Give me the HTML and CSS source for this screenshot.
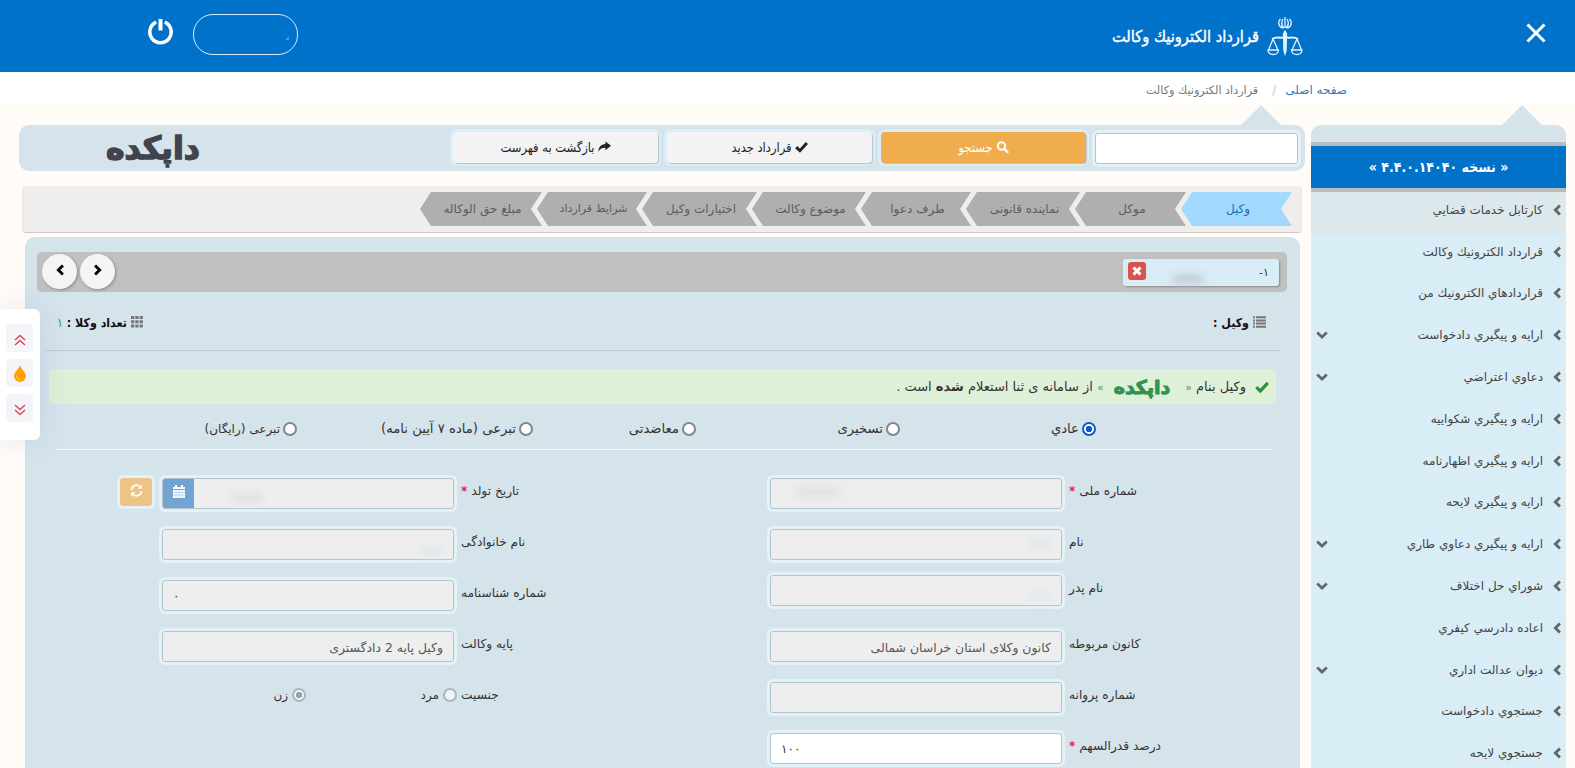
FILE: index.html
```html
<!DOCTYPE html>
<html lang="fa" dir="rtl">
<head>
  <meta charset="UTF-8">
  <title>قرارداد الكترونيك وكالت</title>
  <meta name="viewport" content="width=device-width, initial-scale=1">
  <link rel="stylesheet" href="styles.css">
</head>
<body>
  <svg class="sprite">
    <symbol id="i-chev-l" viewBox="0 0 12 14"><path d="M9.500 1.500L4 7l5.500 5.500" fill="none" stroke="currentColor" stroke-width="3.400"/></symbol>
    <symbol id="i-chev-r" viewBox="0 0 12 14"><path d="M2.500 1.500L8 7l-5.500 5.500" fill="none" stroke="currentColor" stroke-width="3.400"/></symbol>
    <symbol id="i-chev-d" viewBox="0 0 12 8"><path d="M1.200 1.500L6 6l4.800-4.500" fill="none" stroke="currentColor" stroke-width="2.800"/></symbol>
    <symbol id="i-check" viewBox="0 0 14 12"><path d="M1.300 6.200l4 3.800L12.800 1.800" fill="none" stroke="currentColor" stroke-width="3.200"/></symbol>
    <symbol id="i-share" viewBox="0 0 14 12"><path d="M8 0l6 4.700-6 4.800V6.800C4.500 6.500 2 8 .5 11 .3 6 3.500 3 8 2.700z" fill="currentColor"/></symbol>
    <symbol id="i-search" viewBox="0 0 12 12"><circle cx="5" cy="5" r="3.700" fill="none" stroke="currentColor" stroke-width="2"/><path d="M7.800 7.800L11 11" stroke="currentColor" stroke-width="2.400" stroke-linecap="round"/></symbol>
    <symbol id="i-x" viewBox="0 0 10 10"><path d="M1.500 1.500l7 7M8.500 1.500l-7 7" stroke="currentColor" stroke-width="3"/></symbol>
    <symbol id="i-list" viewBox="0 0 13 12"><path d="M0 1.200h2M3 1.200h10M0 4.400h2M3 4.400h10M0 7.600h2M3 7.600h10M0 10.800h2M3 10.800h10" stroke="currentColor" stroke-width="2"/></symbol>
    <symbol id="i-grid" viewBox="0 0 12 12"><path d="M0 1.500h3.300M4.300 1.500h3.300M8.600 1.500h3.300M0 5.800h3.300M4.300 5.800h3.300M8.600 5.800h3.300M0 10.100h3.300M4.300 10.100h3.300M8.600 10.100h3.300" stroke="currentColor" stroke-width="3"/></symbol>
    <symbol id="i-up" viewBox="0 0 12 12"><path d="M1 6l5-4.500L11 6M1 11l5-4.500L11 11" fill="none" stroke="currentColor" stroke-width="1.500"/></symbol>
    <symbol id="i-down" viewBox="0 0 12 12"><path d="M1 1l5 4.500L11 1M1 6l5 4.500L11 6" fill="none" stroke="currentColor" stroke-width="1.500"/></symbol>
  </svg>

  <header class="topbar">
    <svg class="close" viewBox="0 0 20 20"><path d="M1.500 1.500l17 17M18.500 1.500l-17 17" stroke="#fff" stroke-width="3"/></svg>
    <svg class="emblem" viewBox="0 0 36 40" fill="none" stroke="#e4f2ff" stroke-width="1.300">
      <path d="M18 1v11M16 3c-2 3-2 6 1 9M20 3c2 3 2 6-1 9M13.500 3c-3 3-2 8 2.500 9M22.500 3c3 3 2 8-2.500 9"/>
      <path d="M18 15l1.500 3-.5 17-1 3-1-3-.5-17z" fill="#e4f2ff"/>
      <path d="M5 23c5-3 9 0 13-2 4 2 8-1 13 2" stroke-width="2"/>
      <path d="M6 23L1.500 34M6 23l5 11M30 23l-5 11M30 23l4.500 11M1 34h10.500c-.5 6-10 6-10.500 0zM24.500 34H35c-.5 6-10 6-10.500 0z"/>
    </svg>
    <h1>قرارداد الكترونيك وكالت</h1>
    <div class="userbox"><i></i></div>
    <svg class="power" viewBox="0 0 25 26" fill="none" stroke="#fff"><path d="M8.200 3.200a10.700 10.700 0 1 0 8.600 0" stroke-width="3.500"/><path d="M12.500 0v11.500" stroke-width="4"/></svg>
  </header>

  <nav class="crumbs">
    <a href="#">صفحه اصلی</a>
    <span class="slash">/</span>
    <span class="here">قرارداد الكترونيك وكالت</span>
  </nav>

  <div class="page">
    <aside class="sidebar">
      <div class="version">« نسخه ۴.۴.۰.۱۴۰۴۰ »</div>
      <ul class="menu">
        <li class="active"><svg class="go"><use href="#i-chev-l"/></svg><span>كارتابل خدمات قضايي</span></li>
        <li><svg class="go"><use href="#i-chev-l"/></svg><span>قرارداد الكترونيك وكالت</span></li>
        <li><svg class="go"><use href="#i-chev-l"/></svg><span>قراردادهاي الكترونيك من</span></li>
        <li><svg class="go"><use href="#i-chev-l"/></svg><span>ارايه و پيگيري دادخواست</span><svg class="more"><use href="#i-chev-d"/></svg></li>
        <li><svg class="go"><use href="#i-chev-l"/></svg><span>دعاوي اعتراضي</span><svg class="more"><use href="#i-chev-d"/></svg></li>
        <li><svg class="go"><use href="#i-chev-l"/></svg><span>ارايه و پيگيري شكواييه</span></li>
        <li><svg class="go"><use href="#i-chev-l"/></svg><span>ارايه و پيگيري اظهارنامه</span></li>
        <li><svg class="go"><use href="#i-chev-l"/></svg><span>ارايه و پيگيري لايحه</span></li>
        <li><svg class="go"><use href="#i-chev-l"/></svg><span>ارايه و پيگيري دعاوي طاري</span><svg class="more"><use href="#i-chev-d"/></svg></li>
        <li><svg class="go"><use href="#i-chev-l"/></svg><span>شوراي حل اختلاف</span><svg class="more"><use href="#i-chev-d"/></svg></li>
        <li><svg class="go"><use href="#i-chev-l"/></svg><span>اعاده دادرسي كيفري</span></li>
        <li><svg class="go"><use href="#i-chev-l"/></svg><span>ديوان عدالت اداري</span><svg class="more"><use href="#i-chev-d"/></svg></li>
        <li><svg class="go"><use href="#i-chev-l"/></svg><span>جستجوي دادخواست</span></li>
        <li><svg class="go"><use href="#i-chev-l"/></svg><span>جستجوي لايحه</span></li>
      </ul>
    </aside>

    <main class="main">
      <div class="toolbar">
        <input type="text" class="box search">
        <button class="btn orange"><svg class="ic"><use href="#i-search"/></svg>جستجو</button>
        <button class="btn"><svg class="ic"><use href="#i-check"/></svg>قرارداد جدید</button>
        <button class="btn"><svg class="ic"><use href="#i-share"/></svg>بازگشت به فهرست</button>
        <div class="brand">داپکده</div>
      </div>

      <div class="steps">
        <div class="step current">وکیل</div>
        <div class="step">موکل</div>
        <div class="step">نماینده قانونی</div>
        <div class="step">طرف دعوا</div>
        <div class="step">موضوع وکالت</div>
        <div class="step">اختیارات وکیل</div>
        <div class="step narrow">شرایط قرارداد</div>
        <div class="step last">مبلغ حق الوکاله</div>
      </div>

      <section class="panel">
        <div class="tabs">
          <div class="tab"><span>۱-</span><i class="smudge"></i><button class="del"><svg><use href="#i-x"/></svg></button></div>
          <div class="arrows">
            <button><svg><use href="#i-chev-r"/></svg></button>
            <button><svg><use href="#i-chev-l"/></svg></button>
          </div>
        </div>

        <div class="info">
          <div><svg class="list"><use href="#i-list"/></svg>وکیل :</div>
          <div><svg class="grid"><use href="#i-grid"/></svg>تعداد وکلا : <em>۱</em></div>
        </div>

        <div class="alert">
          <svg><use href="#i-check"/></svg>
          <span>وکیل بنام <small>«</small></span>
          <span class="brand green">داپکده</span>
          <span><small>»</small> از سامانه ی ثنا استعلام <b>شده</b> است .</span>
        </div>

        <div class="kinds">
          <label><i class="radio on"></i>عادي</label>
          <label><i class="radio"></i>تسخیری</label>
          <label><i class="radio"></i>معاضدتی</label>
          <label><i class="radio"></i>تبرعی (ماده ۷ آیین نامه)</label>
          <label class="free"><i class="radio"></i>تبرعی (رایگان)</label>
        </div>

        <div class="form">
          <div class="col">
            <div class="field"><label>شماره ملی <b>*</b></label><div class="box"><i class="smudge end"></i></div></div>
            <div class="field short"><label>نام</label><div class="box"><i class="smudge faint"></i></div></div>
            <div class="field tall"><label>نام پدر</label><div class="box"><i class="smudge faint low"></i></div></div>
            <div class="field"><label>کانون مربوطه</label><div class="box">كانون وكلای استان خراسان شمالی</div></div>
            <div class="field"><label>شماره پروانه</label><div class="box"></div></div>
            <div class="field"><label>درصد قدرالسهم <b>*</b></label><div class="box white num">۱۰۰</div></div>
          </div>
          <div class="col">
            <div class="field">
              <label>تاریخ تولد <b>*</b></label>
              <div class="box date"><i class="smudge end low"></i>
                <span class="cal"><svg viewBox="0 0 12 13"><path d="M0 2h2V0h2v2h4V0h2v2h2v2H0zM0 5h12v8H0z" fill="#fff"/><path d="M0 7.500h12M0 10h12M3 5v8M6 5v8M9 5v8" stroke="#8ab3d8" stroke-width=".5"/></svg></span>
              </div>
              <button class="refresh"><svg viewBox="0 0 14 14" fill="none" stroke="#fff" stroke-width="1.800"><path d="M1.500 6.500A5.500 5.500 0 0 1 11 3M12.500 7.500A5.500 5.500 0 0 1 3 11"/><path d="M12.800.5V5H8.300zM1.200 13.500V9h4.500z" fill="#fff" stroke="none"/></svg></button>
            </div>
            <div class="field"><label>نام خانوادگی</label><div class="box"><i class="smudge faint low"></i></div></div>
            <div class="field"><label>شماره شناسنامه</label><div class="box num">۰</div></div>
            <div class="field"><label>پایه وکالت</label><div class="box">وکیل پایه 2 دادگستری</div></div>
            <div class="field"><label>جنسیت</label>
              <div class="sex"><span><i class="radio off"></i>مرد</span><span><i class="radio off on"></i>زن</span></div>
            </div>
          </div>
        </div>
      </section>
    </main>
  </div>

  <div class="float">
    <button><svg><use href="#i-up"/></svg></button>
    <button><svg class="drop" viewBox="0 0 12 17"><path d="M6 0c.8 4 6 7 6 11a6 6 0 0 1-12 0C0 7 5.200 4 6 0z" fill="#ffa000"/><path d="M2.500 10.500c0 2.500 1.200 3.800 3.500 4" fill="none" stroke="#ffd27a"/></svg></button>
    <button><svg><use href="#i-down"/></svg></button>
  </div>
</body>
</html>
```
FILE: styles.css
```css
* {
  box-sizing: border-box;
}

body {
  margin: 0;
  height: 768px;
  overflow: hidden;
  font-family: "DejaVu Sans", sans-serif;
  font-size: 12px;
  color: #333;
  background: #fffcf8;
}

button, input {
  font: inherit;
  border: 0;
  padding: 0;
}

.sprite {
  display: none;
}

/* header */
.topbar {
  display: flex;
  align-items: center;
  height: 72px;
  padding: 0 29px 0 148px;
  background: #0072c9;
}

.close {
  width: 20px;
  height: 20px;
  margin: 0 0 7px 223px;
}

.emblem {
  width: 36px;
  height: 40px;
}

h1 {
  margin: 2px 8px 0 auto;
  font-family: "DejaVu Sans Condensed", "DejaVu Sans", sans-serif;
  font-size: 16.3px;
  font-weight: normal;
  line-height: 24px;
  color: #fff;
  -webkit-text-stroke: 0.4px #fff;
}

.userbox {
  width: 105px;
  height: 41px;
  margin-bottom: 3px;
  border: 1px solid #d4ebff;
  border-radius: 20px;
}

.userbox i {
  display: block;
  width: 4px;
  height: 4px;
  margin: 21px 8px 0 0;
  background: #3d9be8;
  clip-path: polygon(100% 0, 100% 100%, 0 100%);
}

.power {
  width: 25px;
  height: 26px;
  margin: 0 20px 8px 0;
}

.crumbs {
  display: flex;
  align-items: center;
  height: 32px;
  padding: 4px 228px 0 0;
  background: #fff;
}

.crumbs a {
  color: #337ab7;
  text-decoration: none;
}

.crumbs .slash {
  margin: 0 9px 0 14px;
  color: #ccc;
}

.crumbs .here {
  font-size: 11.2px;
  color: #777;
}

.page {
  display: flex;
  gap: 6px;
  padding: 21px 9px 0 19px;
}

/* side menu */
.sidebar {
  position: relative;
  width: 255px;
  flex: none;
  padding-top: 17px;
  border-radius: 10px 10px 0 0;
  background: #d5e3eb;
}

.sidebar::before,
.toolbar::before {
  content: "";
  position: absolute;
  top: -20px;
  right: 24px;
  border: 20px solid transparent;
  border-top: 0;
  border-bottom-color: #d5e3eb;
}

.version {
  height: 50px;
  line-height: 42px;
  border: solid #bbb;
  border-width: 4px 0;
  background: #0072c9;
  color: #fff;
  font-family: "DejaVu Sans Condensed", "DejaVu Sans", sans-serif;
  font-size: 14px;
  font-weight: bold;
  text-align: center;
}

.menu {
  margin: 0;
  padding: 0;
  list-style: none;
  background: #d9edf7;
}

.menu li {
  display: flex;
  align-items: center;
  height: 41.8px;
  padding: 0 4px 6px 5px;
  color: #444;
}

.menu li.active {
  background: #dde8ec;
}

.go {
  width: 10px;
  height: 12px;
  margin-left: 9px;
  color: #666;
}

.more {
  width: 12px;
  height: 8px;
  margin: 0 auto 0 0;
  color: #666;
}

/* content */
.main {
  width: 1286px;
}

.toolbar {
  position: relative;
  display: flex;
  align-items: center;
  gap: 9px;
  height: 46px;
  padding: 0 7px 0 87px;
  border-radius: 10px;
  background: #d5e3eb;
}

.btn,
.search.box {
  width: 205px;
  height: 31px;
}

.search.box {
  width: 203px;
}

.btn {
  display: flex;
  align-items: center;
  justify-content: center;
  gap: 3px;
  margin-top: -2px;
  border-radius: 4px;
  background: #f3f3f3;
  color: #222;
  font-family: "DejaVu Sans Condensed", "DejaVu Sans", sans-serif;
  font-size: 12.8px;
  box-shadow: 1px 1px 1px #b5c5ce, 0 0 0 3px #dceef7;
}

.btn.orange {
  background: #f0ad4e;
  color: #fff;
}

.ic {
  width: 13px;
  height: 12px;
}

.brand {
  margin: 0 auto 0 0;
  font-size: 31.5px;
  font-weight: bold;
  line-height: 40px;
  color: #41434f;
  -webkit-text-stroke: 1.5px currentColor;
}

.steps {
  display: grid;
  grid-template-columns: 106px 106px 109px 105px 109px 110px 105px 122px;
  height: 47px;
  margin: 15px 3px 0;
  padding: 6px 9px 0;
  border: 1px solid #eae6e2;
  border-top: 0;
  border-bottom-color: #d0c8c4;
  border-radius: 4px;
  background: #efeeed;
}

.step {
  height: 34px;
  margin-left: -5px;
  padding-left: 3px;
  background: #afafaf;
  color: #5c5c5c;
  line-height: 34px;
  text-align: center;
  clip-path: polygon(100% 0, calc(100% - 11px) 50%, 100% 100%, 11px 100%, 0 50%, 11px 0);
}

.step.narrow {
  font-size: 11px;
}

.step.last {
  margin-left: 0;
}

.step.current {
  background: #a2d9ff;
  color: #1c6eb0;
}

.panel {
  height: 540px;
  margin: 4px 5px 0 6px;
  padding: 15px 13px 0 12px;
  border-radius: 10px;
  background: #d5e3eb;
}

.tabs {
  display: flex;
  align-items: center;
  justify-content: space-between;
  height: 40px;
  padding: 0 8px 0 5px;
  border-radius: 5px;
  background: #c0c0c0;
}

.tab {
  display: flex;
  align-items: center;
  justify-content: space-between;
  width: 156px;
  height: 27px;
  padding: 0 10px 0 5px;
  border-radius: 3px;
  background: #d9edf7;
  box-shadow: 1px 1px 2px #888;
  font-size: 11px;
}

.smudge {
  display: block;
  width: 30px;
  height: 12px;
  background: #b4bcc0;
  filter: blur(4px);
}

.tab .smudge {
  margin: 14px 30px 0 0;
  height: 6px;
}

.del {
  width: 18px;
  height: 18px;
  margin-bottom: 3px;
  border-radius: 3px;
  background: #d9534f;
  color: #fff;
}

.del svg {
  display: block;
  width: 10px;
  height: 10px;
  margin: auto;
}

.arrows {
  display: flex;
  gap: 3px;
  margin-bottom: 1px;
}

.arrows button {
  width: 35px;
  height: 35px;
  border-radius: 50%;
  background: #f4f4f4;
  box-shadow: 1px 1px 3px #888;
}

.arrows svg {
  width: 10px;
  height: 12px;
}

.info {
  display: flex;
  justify-content: space-between;
  align-items: center;
  height: 59px;
  margin: 0 7px 0 8px;
  padding: 3px 14px 0 12px;
  border-bottom: 1px solid #bccbd3;
  color: #111;
  font-family: "DejaVu Sans Condensed", "DejaVu Sans", sans-serif;
  font-size: 12.3px;
  font-weight: bold;
}

.info svg {
  height: 12px;
  margin-left: 4px;
  vertical-align: -1px;
  color: #777;
}

.list {
  width: 13px;
}

.grid {
  width: 12px;
}

.info em {
  font-style: normal;
  font-weight: normal;
  color: #3d9140;
}

.alert {
  display: flex;
  align-items: center;
  height: 35px;
  margin: 18px 11px 0 12px;
  padding: 0 7px;
  border-radius: 4px;
  background: #dff0d8;
  font-size: 13px;
}

.alert > svg {
  width: 14px;
  height: 12px;
  margin-left: 9px;
  color: #2e8f3c;
}

.alert small {
  color: #3d8f55;
}

.brand.green {
  margin: 0 15px 0 10px;
  font-size: 19px;
  color: #2f9350;
  -webkit-text-stroke-width: 1px;
}

.kinds {
  display: grid;
  grid-template-columns: 196px 204px 163px 236px 1fr;
  align-items: center;
  height: 46px;
  margin: 0 14px 0 19px;
  padding: 4px 177px 0 0;
  border-bottom: 1px solid #f0f6fa;
  font-size: 13.2px;
}

.kinds label {
  display: flex;
  align-items: center;
  gap: 3px;
  white-space: nowrap;
}

.kinds .free {
  font-size: 12px;
}

.radio {
  width: 14px;
  height: 14px;
  flex: none;
  border: 2px solid #7f8790;
  border-radius: 50%;
  background: #fff;
}

.radio.on {
  border-color: #1259c9;
  background: radial-gradient(circle, #1259c9 3px, #fff 3.500px);
}

.radio.off {
  border-color: #adb6bf;
  background: #eef4f8;
}

.radio.off.on {
  background: radial-gradient(circle, #9aa3ac 3px, #eef4f8 3.500px);
}

/* form */
.form {
  display: grid;
  grid-template-columns: 608px 1fr;
  padding-top: 28px;
}

.field {
  display: flex;
  height: 51px;
}

.field.short {
  height: 46px;
}

.field.tall {
  height: 56px;
}

.field label {
  width: 225px;
  flex: none;
  padding: 6px 0 0 7px;
  font-size: 12.2px;
  text-align: left;
}

.field label b {
  color: #e0263c;
}

.box {
  display: flex;
  align-items: center;
  width: 292px;
  height: 31px;
  padding: 1px 10px 0;
  border: 1px solid #b4c4cc;
  border-radius: 3px;
  background: #eee;
  box-shadow: 0 0 0 3px #e3f1f8;
  color: #555;
  font-size: 12.4px;
}

.search.box,
.box.white {
  background: #fff;
}

.box.num {
  justify-content: flex-end;
  color: #333;
  font-size: 12px;
}

.box .smudge {
  width: 45px;
  height: 8px;
  background: #dcdfe1;
}

.box .end {
  margin: 0 auto 4px 15px;
}

.box .faint {
  width: 22px;
  background: #dfe6ea;
}

.box .low {
  margin-top: 12px;
}

.date {
  padding-left: 0;
}

.date .end {
  width: 30px;
  margin-left: 38px;
}

.cal {
  width: 31px;
  height: 29px;
  margin-top: -1px;
  border-radius: 2px 0 0 2px;
  background: #71a4d0;
  text-align: center;
}

.cal svg {
  width: 12px;
  margin-top: 6px;
}

.refresh {
  width: 32px;
  height: 28px;
  margin-right: 10px;
  border-radius: 3px;
  background: #edc486;
  box-shadow: 0 0 0 3px #e3f1f8;
}

.refresh svg {
  width: 13px;
  height: 13px;
}

.sex {
  display: flex;
  margin-right: -3px;
  padding-top: 6px;
}

.sex span {
  display: flex;
  gap: 4px;
  width: 151px;
}

/* zoom / colour widget over the left edge */
.float {
  position: fixed;
  left: 0;
  top: 309px;
  display: flex;
  flex-direction: column;
  gap: 7px;
  width: 40px;
  height: 131px;
  padding: 15px 7px;
  border-radius: 0 6px 6px 0;
  background: #fff;
  box-shadow: 0 0 30px rgba(80, 110, 180, 0.15);
}

.float button {
  width: 27px;
  height: 28px;
  border-radius: 4px;
  background: #f4f5f8;
  color: #e0455f;
}

.float svg {
  width: 12px;
  height: 12px;
  vertical-align: -5px;
}

.float .drop {
  width: 12px;
  height: 17px;
}
```
